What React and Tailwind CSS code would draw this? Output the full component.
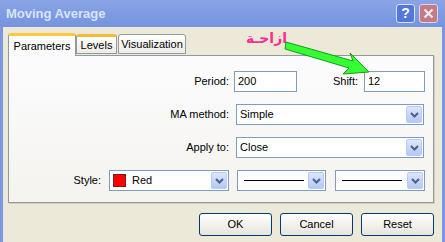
import React from "react";

const font = { fontFamily: '"Liberation Sans", Arial, sans-serif' };

function Chevron() {
  return (
    <div className="w-[16px] h-[17px] mr-[1px] rounded-[2px] border border-[#b9cbf3] bg-gradient-to-b from-[#dce6fd] to-[#b4c8f6] flex items-center justify-center">
      <svg width="9" height="6" viewBox="0 0 9 6">
        <path d="M1 1 L4.5 4.5 L8 1" fill="none" stroke="#4d6185" strokeWidth="2" />
      </svg>
    </div>
  );
}

function Combo({ width, children }) {
  return (
    <div
      className={`${width} h-[21px] border border-[#7f9db9] bg-white flex items-center justify-between`}
    >
      <div className="flex items-center flex-1 pl-[3px]">{children}</div>
      <Chevron />
    </div>
  );
}

function Field({ width, value }) {
  return (
    <div
      className={`${width} h-[21px] border border-[#7f9db9] bg-white flex items-center pl-[3px]`}
    >
      {value}
    </div>
  );
}

function XpButton({ label }) {
  return (
    <button className="w-[73px] h-[23px] rounded-[3px] border border-[#003c74] bg-gradient-to-b from-[#ffffff] to-[#e6e4dc] text-[11px] text-black">
      {label}
    </button>
  );
}

export default function App() {
  return (
    <div
      className="relative w-[445px] h-[242px] bg-[#7b97e0] flex flex-col text-[11px] text-black overflow-hidden"
      style={font}
    >
      {/* title bar */}
      <div className="h-[27px] bg-gradient-to-b from-[#8aa4e6] to-[#7593de] flex items-center justify-between pl-[6px] pr-[7px]">
        <span className="text-[13px] font-bold text-[#d8e4f8]">Moving Average</span>
        <div className="flex gap-[4px]">
          <div className="w-[19px] h-[19px] rounded-[3px] border border-[#dbe4fb] bg-[#5577dc] flex items-center justify-center text-white font-bold text-[14px]">
            ?
          </div>
          <div className="w-[19px] h-[19px] rounded-[3px] border border-[#e6d3da] bg-[#c27b88] flex items-center justify-center">
            <svg width="11" height="11" viewBox="0 0 11 11">
              <path d="M1.5 1.5 L9.5 9.5 M9.5 1.5 L1.5 9.5" stroke="#f4e8ec" strokeWidth="2.2" />
            </svg>
          </div>
        </div>
      </div>

      {/* body */}
      <div className="flex-1 mx-[3px] bg-[#ece9d8] pl-[5px] pr-[8px] pt-[6px] flex flex-col">
        {/* tabs */}
        <div className="flex items-end h-[23px] relative z-10">
          <div className="w-[68px] h-[23px] border-x border-[#919b9c] border-t-[3px] border-t-[#ffc83c] rounded-t-[3px] bg-[#fcfcfe] flex items-start justify-center pt-[2px]">
            Parameters
          </div>
          <div className="w-[41px] h-[20px] mb-[2px] border border-[#919b9c] border-t-[3px] border-t-[#f7b93a] rounded-t-[3px] bg-gradient-to-b from-white to-[#ecebe5] flex items-center justify-center">
            Levels
          </div>
          <div className="w-[68px] h-[20px] mb-[2px] ml-[1px] border border-[#919b9c] rounded-t-[3px] bg-gradient-to-b from-white to-[#ecebe5] flex items-center justify-center">
            Visualization
          </div>
        </div>

        {/* panel */}
        <div className="h-[148px] -mt-[1px] border border-[#919b9c] bg-gradient-to-b from-[#fcfcfe] to-[#f4f3ee] shadow-[1px_1px_0_#d0cdc0] pt-[15px] flex flex-col gap-[12px]">
          <div className="flex items-center h-[21px]">
            <span className="w-[220px] text-right">Period:</span>
            <div className="ml-[5px]">
              <Field width="w-[63px]" value="200" />
            </div>
            <span className="w-[61px] text-right">Shift:</span>
            <div className="ml-[6px]">
              <Field width="w-[61px]" value="12" />
            </div>
          </div>
          <div className="flex items-center h-[21px]">
            <span className="w-[220px] text-right">MA method:</span>
            <div className="ml-[7px]">
              <Combo width="w-[188px]">Simple</Combo>
            </div>
          </div>
          <div className="flex items-center h-[21px]">
            <span className="w-[220px] text-right">Apply to:</span>
            <div className="ml-[7px]">
              <Combo width="w-[188px]">Close</Combo>
            </div>
          </div>
          <div className="flex items-center h-[21px]">
            <span className="w-[92px] text-right">Style:</span>
            <div className="ml-[8px]">
              <Combo width="w-[120px]">
                <div className="w-[13px] h-[13px] bg-[#ff0000] border border-[#7a1a1a]" />
                <span className="ml-[6px]">Red</span>
              </Combo>
            </div>
            <div className="ml-[8px]">
              <Combo width="w-[89px]">
                <div className="w-[60px] h-[1px] bg-black ml-[3px]" />
              </Combo>
            </div>
            <div className="ml-[9px]">
              <Combo width="w-[90px]">
                <div className="w-[60px] h-[1px] bg-black ml-[3px]" />
              </Combo>
            </div>
          </div>
        </div>

        {/* buttons */}
        <div className="flex justify-end gap-[8px] mt-[10px]">
          <XpButton label="OK" />
          <XpButton label="Cancel" />
          <XpButton label="Reset" />
        </div>
      </div>

      {/* annotation */}
      <span
        className="absolute left-[246px] top-[28px] text-[14px] font-bold text-[#ff2d8f]"
        style={{ fontFamily: '"DejaVu Sans", sans-serif' }}
        dir="rtl"
      >
        ازاحـة
      </span>
      <svg className="absolute left-0 top-0" width="445" height="242" viewBox="0 0 445 242">
        <path
          d="M286 42 L353 61 L350 53 L369 72 L343 74 L349 68 L285 49 Z"
          fill="#33ff33"
          stroke="#1a9a1a"
          strokeWidth="1"
          strokeLinejoin="round"
        />
      </svg>
    </div>
  );
}
